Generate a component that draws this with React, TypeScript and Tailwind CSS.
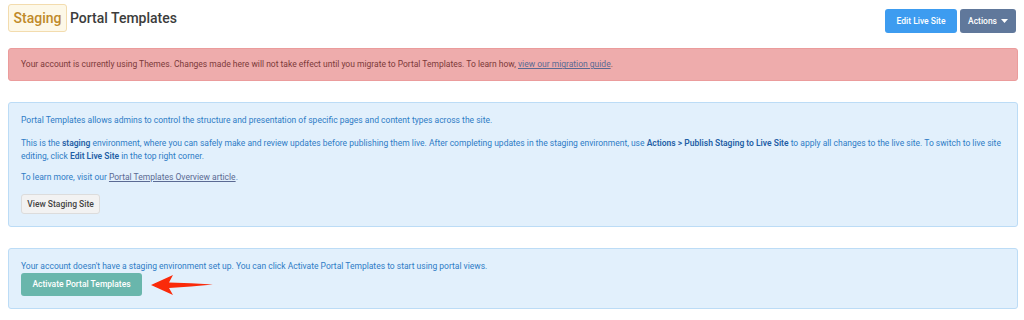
import React from "react";

export default function App() {
  return (
    <div className="w-[1024px] h-[320px] bg-white overflow-hidden px-2 pt-1" style={{ fontFamily: "Roboto, 'Liberation Sans', sans-serif" }}>
      <div className="flex items-start justify-between">
        <div className="flex items-center gap-[3px]">
          <span className="h-[28px] w-[59px] flex items-center justify-center rounded-[3px] border border-[#f3dcae] bg-[#fdf8e8] text-[#c08a2a] text-[14px] font-medium">Staging</span>
          <span className="text-[14px] font-medium text-[#3c3c3c]">Portal Templates</span>
        </div>
        <div className="flex gap-[3px] mt-[5px]">
          <button className="h-[24px] w-[72px] rounded-[3px] bg-[#3d9cf0] text-white text-[8.5px] font-medium">Edit Live Site</button>
          <button className="h-[24px] w-[56px] rounded-[3px] bg-[#60789b] text-white text-[8.5px] font-medium flex items-center justify-center gap-[4px]">
            Actions
            <svg width="7" height="4" viewBox="0 0 7 4"><path d="M0 0h7L3.5 4z" fill="white" /></svg>
          </button>
        </div>
      </div>

      <div className="mt-[15px] h-[33px] w-[1010px] rounded-[3px] border border-[#eb9c9c] bg-[#eeacac] flex items-center px-[12px] text-[8.5px] text-[#7c3a3a]">
        <span>
          Your account is currently using Themes. Changes made here will not take effect until you migrate to Portal Templates. To learn how,{" "}
          <span className="underline text-[#5b6a93]">view our migration guide</span>.
        </span>
      </div>

      <div className="mt-[21px] w-[1010px] h-[125px] rounded-[3px] border border-[#bcdcf6] bg-[#e2f0fc] px-[12px] pt-[11px] text-[8.5px] leading-[13px] text-[#2e7cc6]">
        <p>Portal Templates allows admins to control the structure and presentation of specific pages and content types across the site.</p>
        <p className="mt-[10px]">
          This is the <span className="text-[#1f5fa6] font-semibold">staging</span> environment, where you can safely make and review updates before publishing them live. After completing updates in the staging environment, use <span className="text-[#1f5fa6] font-semibold">Actions &gt; Publish Staging to Live Site</span> to apply all changes to the live site. To switch to live site editing, click <span className="text-[#1f5fa6] font-semibold">Edit Live Site</span> in the top right corner.
        </p>
        <p className="mt-[8px]">
          To learn more, visit our <span className="underline text-[#5b6a93]">Portal Templates Overview article</span>.
        </p>
        <button className="mt-[10px] h-[20px] w-[79px] rounded-[3px] border border-[#dcdcdc] bg-[#f2f2f2] text-[8.5px] font-medium text-[#444]">View Staging Site</button>
      </div>

      <div className="mt-[21px] w-[1010px] h-[61px] rounded-[3px] border border-[#bcdcf6] bg-[#e2f0fc] px-[12px] pt-[11px] text-[8.5px] leading-[13px] text-[#2e7cc6]">
        <p>Your account doesn't have a staging environment set up. You can click Activate Portal Templates to start using portal views.</p>
        <div className="flex items-center">
          <button className="h-[23px] w-[121px] rounded-[3px] bg-[#69b6ac] text-white text-[8.5px] font-medium">Activate Portal Templates</button>
          <svg className="ml-[9px]" width="62" height="22" viewBox="0 0 62 22">
            <path d="M0 11 L22 1 L18 8.5 Q40 9 62 10.5 Q40 12.5 18 14 L22 21 Z" fill="#fa2a0a" />
          </svg>
        </div>
      </div>
    </div>
  );
}
